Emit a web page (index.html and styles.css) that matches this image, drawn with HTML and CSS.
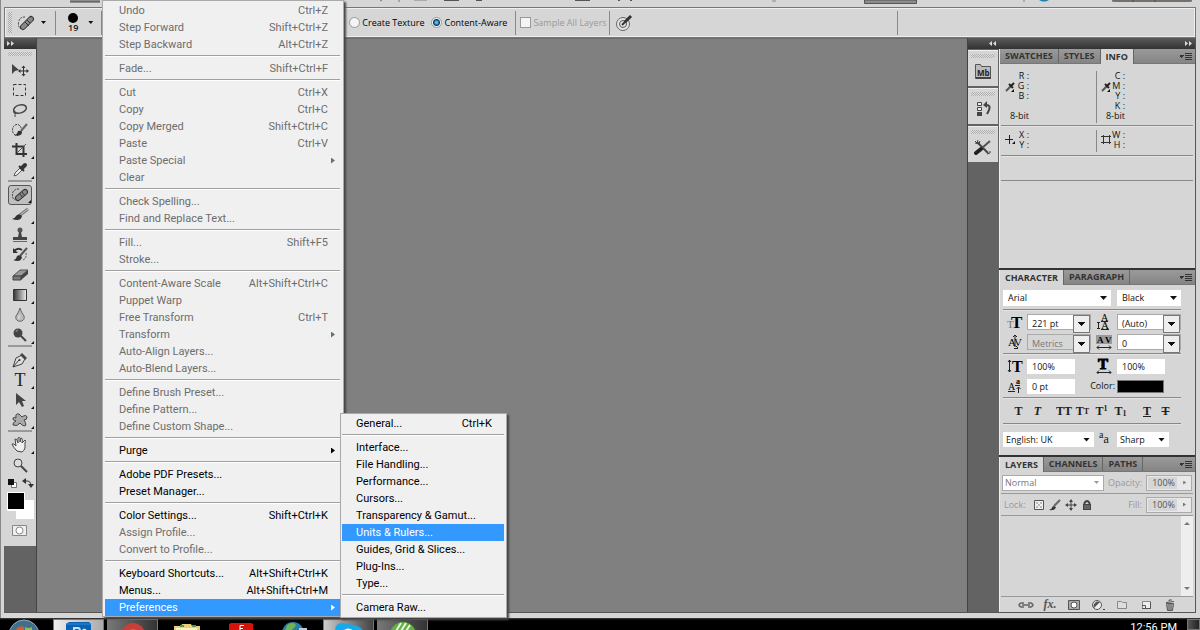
FILE: index.html
```html
<!DOCTYPE html>
<html lang="en">
<head>
  <meta charset="UTF-8">
  <meta name="viewport" content="width=device-width, initial-scale=1.0">
  <title>Photo Editor</title>
  <link rel="stylesheet" href="styles.css">
</head>
<body>
  <!-- Application bar -->
  <header class="app-bar">
    <svg width="640" height="7" viewBox="0 0 640 7">
      <path d="M70 0h30v2H70z" fill="#8c8c8c"/><path d="M70 2h30" stroke="#444"/>
      <path d="M380 0l2 1M399 0v2" stroke="#777"/>
      <path d="M414 .5h13" stroke="#aaa"/><path d="M444 .5h15M476 .5h6M575 .5h15M618 .5h2M630 .5h2" stroke="#555"/>
    </svg>
    <svg class="app-bar-right" width="440" height="7" viewBox="0 0 440 7">
      <path d="M13 0v2M15 0v2M264 0v2" stroke="#888"/>
      <path d="M104.500 0v3.500h52V0z" fill="#8c8c8c" stroke="#555"/>
      <path d="M279 0q5 3 10 0z" fill="#1d7fae"/>
      <path d="M352 0h80v1q0 1-2 1h-76q-2 0-2-1z" fill="#77716d"/><path d="M373 0v2M395 0v2" stroke="#444"/>
    </svg>
  </header>

  <!-- Tool options -->
  <section class="options">
    <span class="grip-v"></span>
    <button class="option-tool" aria-label="Healing brush">
      <svg width="20" height="20" viewBox="0 0 20 20">
        <path d="M9 4Q3 4 2.500 10t4 6" fill="none" stroke="#444" stroke-dasharray="2 1"/>
        <path d="M7 14l8-8" stroke="#333" stroke-width="6" stroke-linecap="round"/>
        <path d="M7 14l8-8" stroke="#888" stroke-width="4" stroke-linecap="round"/>
        <path d="M9 9l4 4M11 7l3 3" stroke="#333"/>
      </svg>
      <i class="caret"></i>
    </button>
    <span class="rule"></span>
    <button class="option-size">
      <span class="size"><i class="dot"></i>19</span>
      <i class="caret"></i>
    </button>
    <span class="rule"></span>
    <div class="option-type">
      <label><input type="radio" name="type">Create Texture</label>
      <label><input type="radio" name="type" checked>Content-Aware</label>
    </div>
    <span class="rule"></span>
    <label class="off"><input type="checkbox" disabled>Sample All Layers</label>
    <span class="rule"></span>
    <button class="option-target" aria-label="Pressure">
      <svg width="18" height="18" viewBox="0 0 18 18">
        <circle cx="8" cy="10" r="6.500" fill="#e4e4e4" stroke="#666"/>
        <circle cx="8" cy="10" r="3.500" fill="none" stroke="#555"/>
        <path d="M7 11l4-4" stroke="#333" stroke-width="2"/><path d="M10 8l6-6" stroke="#333" stroke-width="3"/>
      </svg>
    </button>
    <span class="rule"></span>
  </section>

  <main class="workspace">
    <aside class="toolbox">
      <div class="dock-head">
        <svg width="7" height="5" viewBox="0 0 7 5"><path d="M0 0l3 2.500L0 5zM4 0l3 2.500L4 5z" fill="#ddd"/></svg>
      </div>
      <div class="tools">
        <span class="grip"></span>
        <button class="tool" aria-label="Move"><svg viewBox="0 0 24 20"><path d="M4 4v10l3-3 4-1z" fill="#444"/><path d="M11.500 11h8M15.500 7v8" stroke="#333"/><path d="M15.500 5.500l-2 2.500h4zM15.500 16.500l-2-2.500h4zM10 11l2.500-2v4zM21 11l-2.500-2v4z" fill="#333"/></svg></button>
        <button class="tool more" aria-label="Marquee"><svg viewBox="0 0 24 20"><path d="M5.500 4.500h12v11h-12z" fill="none" stroke="#333" stroke-dasharray="3 2"/></svg></button>
        <button class="tool more" aria-label="Lasso"><svg viewBox="0 0 24 20"><ellipse cx="12" cy="9" rx="6.500" ry="4" transform="rotate(-15 12 9)" fill="none" stroke="#444" stroke-width="1.500"/><path d="M7 11q-2 0-1 2 2 1 2-1-1-1-1 5" fill="none" stroke="#444"/></svg></button>
        <button class="tool more" aria-label="Quick selection"><svg viewBox="0 0 24 20"><ellipse cx="9" cy="10" rx="4.500" ry="5.500" fill="none" stroke="#333" stroke-dasharray="2 1"/><path d="M13 11l6-7" stroke="#666" stroke-width="2"/><path d="M6 15q3 0 4-4 2-1 4 1 0 5-8 3z" fill="#333"/></svg></button>
        <button class="tool more" aria-label="Crop"><svg viewBox="0 0 24 20"><path d="M8.500 3v11H19M4 6.500h11.500V17" fill="none" stroke="#333" stroke-width="2"/><path d="M9 13l9-9" stroke="#555"/></svg></button>
        <button class="tool more" aria-label="Eyedropper"><svg viewBox="0 0 24 20"><path d="M6 16l1-3 6-6 2 2-6 6z" fill="#eee" stroke="#555"/><path d="M11 6l5 5" stroke="#333" stroke-width="2"/><path d="M14 8l3-3" stroke="#333" stroke-width="4" stroke-linecap="round"/></svg></button>
        <hr>
        <button class="tool more active" aria-label="Healing brush"><svg viewBox="0 0 24 20"><path d="M11 4Q5 4 4.500 9t3 6" fill="none" stroke="#444" stroke-dasharray="2 1"/><path d="M10 13l7-6" stroke="#333" stroke-width="6" stroke-linecap="round"/><path d="M10 13l7-6" stroke="#888" stroke-width="4" stroke-linecap="round"/><path d="M12 9l3 4M14 7l3 4" stroke="#333"/></svg></button>
        <button class="tool more" aria-label="Brush"><svg viewBox="0 0 24 20"><path d="M12 10l8-6" stroke="#777" stroke-width="3"/><path d="M12 10l8-6" stroke="#ccc"/><path d="M4 14q3-1 5-4 3-2 5 1-1 6-10 3z" fill="#333"/></svg></button>
        <button class="tool more" aria-label="Clone stamp"><svg viewBox="0 0 24 20"><circle cx="12" cy="5" r="2.500" fill="#555"/><path d="M11 7h2l1 5h5v3H5v-3h5z" fill="#444"/><path d="M5 16.500h14" stroke="#666"/></svg></button>
        <button class="tool more" aria-label="History brush"><svg viewBox="0 0 24 20"><path d="M6 6q4-4 8-1" fill="none" stroke="#333" stroke-width="2"/><path d="M5 3v5h5z" fill="#333"/><path d="M12 11l7-8" stroke="#555" stroke-width="2"/><path d="M5 15q3 0 4-4 3-2 5 1-1 6-9 3z" fill="#333"/><path d="M18 8q1 5-3 7" fill="none" stroke="#555" stroke-dasharray="2 1"/></svg></button>
        <button class="tool more" aria-label="Eraser"><svg viewBox="0 0 24 20"><path d="M5 11l7-6h8l-7 6z" fill="#999" stroke="#555"/><path d="M5 11h8v4H5z" fill="#777" stroke="#444"/><path d="M13 11l7-6v4l-7 6z" fill="#444"/></svg></button>
        <button class="tool more" aria-label="Gradient"><svg viewBox="0 0 24 20"><defs><linearGradient id="grad"><stop stop-color="#333"/><stop offset="1" stop-color="#eee"/></linearGradient></defs><path d="M5.500 4.500h13v11h-13z" fill="url(#grad)" stroke="#333"/></svg></button>
        <button class="tool more" aria-label="Blur"><svg viewBox="0 0 24 20"><path d="M12 3q1 4 4 8c2 7-10 7-8 0q3-4 4-8z" fill="#bbb" stroke="#666"/><path d="M11 14q-1-2 1-4" stroke="#eee" fill="none"/></svg></button>
        <button class="tool more" aria-label="Dodge"><svg viewBox="0 0 24 20"><circle cx="10" cy="8" r="4.500" fill="#444"/><path d="M13 11l5 5" stroke="#444" stroke-width="2"/><path d="M8 7q0-2 2-2" stroke="#999" fill="none"/></svg></button>
        <hr>
        <button class="tool more" aria-label="Pen"><svg viewBox="0 0 24 20"><path d="M5 17l3-9 6-3 3 4-3 5z" fill="#ddd" stroke="#444"/><path d="M14 3l5 5-2 2-5-5z" fill="#444"/><path d="M5 17l6-7" stroke="#444"/><circle cx="11.500" cy="10" r="1" fill="#333"/></svg></button>
        <button class="tool more type" aria-label="Type">T</button>
        <button class="tool more" aria-label="Path selection"><svg viewBox="0 0 24 20"><path d="M8 3v12l3-3 3 5 2-1-2-5h4z" fill="#444"/></svg></button>
        <button class="tool more" aria-label="Custom shape"><svg viewBox="0 0 24 20"><path d="M8 8Q7 3 11 4l3 3q4-3 5 0 0 3-3 3 3 5 1 6-3 0-5-3-3 4-7 2-1-2 3-4-4-1-3-3 1-1 3 0z" fill="#aaa" stroke="#444"/></svg></button>
        <hr>
        <button class="tool more" aria-label="Hand"><svg viewBox="0 0 24 20"><path d="M9 16q-4-4-5-7 2-1 4 2L7 4q2-1 3 4V3q2-1 2 0v4l1-4q2 0 1 5l3-3q1 1 0 3v5q-1 3-3 4z" fill="#eee" stroke="#444"/></svg></button>
        <button class="tool" aria-label="Zoom"><svg viewBox="0 0 24 20"><circle cx="10" cy="8" r="4" fill="#ddd" stroke="#444"/><path d="M13 11l6 6" stroke="#444" stroke-width="2"/></svg></button>
        <svg class="swatches" width="30" height="66" viewBox="0 0 30 66">
          <path d="M6.500 7.500h5v5h-5z" fill="#fff" stroke="#777"/><path d="M3 4h6v6H3z" fill="#111"/>
          <path d="M20 6h2q4 0 4 5" stroke="#333" fill="none"/><path d="M21 3v6l-4-3zM23 9h6l-3 4z" fill="#333"/>
          <path d="M11 25h18v19H11z" fill="#fff"/><path d="M2 17h18v19H2z" fill="#fff"/><path d="M3 18h16v16H3z"/>
          <path d="M7.500 50.500h14v10h-14z" fill="#eee" stroke="#888"/><circle cx="14.500" cy="55.500" r="3.500" fill="#fff" stroke="#888"/>
        </svg>
      </div>
    </aside>

    <section class="canvas"></section>

    <aside class="dock">
      <div class="dock-head split">
        <svg width="7" height="5" viewBox="0 0 7 5"><path d="M3 0L0 2.500 3 5zM7 0L4 2.500 7 5z" fill="#ddd"/></svg>
        <svg width="7" height="5" viewBox="0 0 7 5"><path d="M0 0l3 2.500L0 5zM4 0l3 2.500L4 5z" fill="#ddd"/></svg>
      </div>
      <div class="dock-body">
        <div class="dock-icons">
          <div class="dock-icon"><span class="grip"></span>
            <button aria-label="Mini Bridge"><svg width="18" height="18" viewBox="0 0 18 18"><path d="M1.500 2.500h5l1 2h9v12h-15z" fill="#bbb" stroke="#555"/><path d="M2 16h15" stroke="#444" stroke-width="2"/><text x="3" y="14" font-size="8" font-weight="700" fill="#222">Mb</text></svg></button></div>
          <div class="dock-icon"><span class="grip"></span>
            <button aria-label="History"><svg width="18" height="18" viewBox="0 0 18 18"><path d="M3.500 2.500h4v3h-4zM3.500 7.500h4v3h-4z" fill="#eee" stroke="#444"/><path d="M3 12h5v4H3z" fill="#444"/><path d="M11 5q8-1 2 9" fill="none" stroke="#444" stroke-width="2"/><path d="M9 5l4-4v7z" fill="#444"/></svg></button></div>
          <div class="dock-icon"><span class="grip"></span>
            <button aria-label="Tool presets"><svg width="18" height="18" viewBox="0 0 18 18"><path d="M3 4l11 11" stroke="#444" stroke-width="2"/><path d="M1 3l2 2 1-3M1 5l4 1 1-3M13 16l3-1v-2" stroke="#444" fill="none"/><path d="M8 10l8-7" stroke="#555" stroke-width="2"/><path d="M2 15l5-4" stroke="#222" stroke-width="4" stroke-linecap="round"/></svg></button></div>
        </div>

        <div class="panels">
          <section class="panel info">
            <nav class="tabs"><button>SWATCHES</button><button>STYLES</button><button class="current">INFO</button><i class="panel-menu"></i></nav>
            <div class="readouts">
              <div class="readout">
                <svg width="10" height="12" viewBox="0 0 10 12"><path d="M1 10l5-5" stroke="#555" stroke-width="2"/><path d="M4 3l4 4M6 5l3-3" stroke="#222" stroke-width="2"/><path d="M6 11h3V8z" fill="#111"/></svg>
                <p>R :<br>G :<br>B :<br><br>8-bit</p>
              </div>
              <div class="readout">
                <svg width="10" height="12" viewBox="0 0 10 12"><path d="M1 10l5-5" stroke="#555" stroke-width="2"/><path d="M4 3l4 4M6 5l3-3" stroke="#222" stroke-width="2"/><path d="M6 11h3V8z" fill="#111"/></svg>
                <p>C :<br>M :<br>Y :<br>K :<br>8-bit</p>
              </div>
            </div>
            <div class="readouts pos">
              <div class="readout">
                <svg width="10" height="12" viewBox="0 0 10 12"><path d="M0 5.500h8M4.500 1v9" stroke="#222"/><path d="M7 10h3v-3z" fill="#111"/></svg>
                <p>X :<br>Y :</p>
              </div>
              <div class="readout">
                <svg width="10" height="12" viewBox="0 0 10 12"><path d="M2.500 1v9M8.500 1v9M0 2.500h10M0 8.500h10" fill="none" stroke="#333"/></svg>
                <p>W :<br>H :</p>
              </div>
            </div>
            <div class="info-gap"></div>
          </section>

          <section class="panel character">
            <nav class="tabs"><button class="current">CHARACTER</button><button>PARAGRAPH</button><i class="panel-menu"></i></nav>
            <div class="char-body">
              <div class="char-top">
                <span class="select"><select aria-label="Font"><option>Arial</option></select></span>
                <span class="select"><select aria-label="Style"><option>Black</option></select></span>
              </div>
              <hr>
              <div class="char-grid">
                <svg class="glyph" width="16" height="16" viewBox="0 0 16 16"><text x="0" y="14" font-size="11" fill="#777">T</text><text x="4" y="14" font-size="17" font-weight="700">T</text></svg>
                <span class="combo"><select aria-label="Size"><option>221 pt</option></select></span>
                <svg class="glyph" width="16" height="16" viewBox="0 0 16 16"><text x="5" y="7" font-size="10">A</text><text x="5" y="15" font-size="11">A</text><path d="M2.500 8v7M1 8.500h3M1 14.500h3M5 7.500h7M5 15.500h8" stroke="#222"/></svg>
                <span class="combo"><select aria-label="Leading"><option>(Auto)</option></select></span>
                <svg class="glyph" width="16" height="16" viewBox="0 0 16 16"><text x="1" y="12" font-size="11">A</text><text x="7" y="12" font-size="11">V</text><path d="M8 1v12M6 3l2-2 2 2M7 14.500h4M9 12l2 2" fill="none" stroke="#222"/></svg>
                <span class="combo off"><select aria-label="Kerning"><option>Metrics</option></select></span>
                <svg class="glyph" width="16" height="16" viewBox="0 0 16 16"><path d="M0 1h16v9H0z" fill="#999"/><text x="1" y="9" font-size="9" font-weight="700">A</text><text x="9" y="9" font-size="9" font-weight="700">V</text><path d="M1 13.500h14M3 11.500l-2 2 2 2M13 11.500l2 2-2 2" fill="none" stroke="#222"/></svg>
                <span class="combo"><select aria-label="Tracking"><option>0</option></select></span>
              </div>
              <hr>
              <div class="char-grid short">
                <svg class="glyph" width="16" height="16" viewBox="0 0 16 16"><path d="M2.500 2v12M1 4l1.500-2L4 4M1 12l1.500 2L4 12" fill="none" stroke="#222"/><text x="5" y="14" font-size="16" font-weight="700">T</text></svg>
                <input aria-label="Vertical scale" value="100%">
                <svg class="glyph" width="16" height="16" viewBox="0 0 16 16"><text x="2" y="11" font-size="15" font-weight="700" stroke="#000">T</text><path d="M1 14.500h14M3 12.500l-2 2 2 2M13 12.500l2 2-2 2" fill="none" stroke="#222"/></svg>
                <input aria-label="Horizontal scale" value="100%">
                <svg class="glyph" width="16" height="16" viewBox="0 0 16 16"><text x="1" y="12" font-size="10">A</text><text x="9" y="6" font-size="8" font-weight="700">a</text><path d="M1 13.500h7M8 7.500h5M11.500 9v6M9.500 11l2-2 2 2" fill="none" stroke="#222"/></svg>
                <input aria-label="Baseline shift" value="0 pt">
                <label class="color-label" for="color">Color:</label>
                <button id="color" class="color" aria-label="Text color"></button>
              </div>
              <hr>
              <div class="char-styles">
                <button><b>T</b></button><button><em>T</em></button><button class="wide">TT</button><button>T<small>T</small></button><button>T<sup>1</sup></button><button>T<sub>1</sub></button><button class="wide"><u>T</u></button><button><s>T</s></button>
              </div>
              <hr>
              <div class="char-lang">
                <span class="select"><select aria-label="Language"><option>English: UK</option></select></span>
                <span class="aa"><sup>a</sup>a</span>
                <span class="select"><select aria-label="Anti-aliasing"><option>Sharp</option></select></span>
              </div>
            </div>
          </section>

          <section class="panel layers">
            <nav class="tabs"><button class="current">LAYERS</button><button>CHANNELS</button><button>PATHS</button><i class="panel-menu"></i></nav>
            <div class="layer-row">
              <span class="select blend"><select aria-label="Blend mode"><option>Normal</option></select></span>
              <label for="opacity">Opacity:</label>
              <span class="percent"><input id="opacity" value="100%"><button aria-label="Opacity slider"></button></span>
            </div>
            <div class="layer-row">
              <span class="lock">Lock:</span>
              <button aria-label="Lock transparency"><svg width="12" height="12" viewBox="0 0 12 12"><path d="M1.500 1.500h9v9h-9z" fill="#eee" stroke="#555"/><path d="M3 3h2v2H3zM7 3h2v2H7zM5 5h2v2H5zM3 7h2v2H3zM7 7h2v2H7z" fill="#bbb"/></svg></button>
              <button aria-label="Lock pixels"><svg width="12" height="12" viewBox="0 0 12 12"><path d="M5 7l6-6" stroke="#666" stroke-width="2"/><path d="M0 11q3-1 4-4l3 1q-1 4-7 3z" fill="#333"/></svg></button>
              <button aria-label="Lock position"><svg width="12" height="12" viewBox="0 0 12 12"><path d="M1 6h10M6 1v10" stroke="#444"/><path d="M6 0L4 3h4zM6 12L4 9h4zM0 6l3-2v4zM12 6L9 4v4z" fill="#444"/></svg></button>
              <button aria-label="Lock all"><svg width="12" height="12" viewBox="0 0 12 12"><path d="M3.500 6V4q2.500-4 5 0v2" fill="none" stroke="#444" stroke-width="2"/><path d="M2 5h8v6H2z" fill="#444"/><path d="M3 7h6M3 9h6" stroke="#888"/></svg></button>
              <label class="fill" for="fill">Fill:</label>
              <span class="percent"><input id="fill" value="100%"><button aria-label="Fill slider"></button></span>
            </div>
            <div class="layer-list"><div class="scrollbar"><i class="up"></i><i class="down"></i></div></div>
            <footer class="layer-tools">
              <button aria-label="Link"><svg viewBox="0 0 16 12"><path d="M6 4H3q-4 2 0 4h3M10 4h3q4 2 0 4h-3M4 6h8" fill="none" stroke="#666" stroke-width="1.500"/></svg></button>
              <button aria-label="Effects" class="fx">fx.</button>
              <button aria-label="Mask"><svg viewBox="0 0 16 12"><path d="M2.500 1.500h11v9h-11z" fill="#aaa" stroke="#555"/><circle cx="8" cy="6" r="3" fill="#fff" stroke="#555"/></svg></button>
              <button aria-label="Adjustment"><svg viewBox="0 0 16 12"><circle cx="7" cy="6" r="4.500" fill="#eee" stroke="#555"/><path d="M4 9l6-6a4.500 4.500 0 0 0-6 6z" fill="#555"/><path d="M13 10h2v1h-2z" fill="#444"/></svg></button>
              <button aria-label="Group"><svg viewBox="0 0 16 12"><path d="M3.500 2.500h4l1 1h4v6h-9z" fill="#ddd" stroke="#888"/></svg></button>
              <button aria-label="New layer"><svg viewBox="0 0 16 12"><path d="M4.500 2.500h8v7h-8z" fill="#eee" stroke="#888"/><path d="M4 9.500h8.500V3M7.500 9V6.500H4" stroke="#555" fill="none"/></svg></button>
              <button aria-label="Delete"><svg viewBox="0 0 16 12"><path d="M4 3.500l8-1M7 2V1h3" stroke="#555" fill="none"/><path d="M4.500 4.500h7l-1 7h-5z" fill="#aaa" stroke="#555"/><path d="M7 5v6M9 5v6" stroke="#666"/></svg></button>
            </footer>
          </section>
        </div>
      </div>
    </aside>
  </main>

  <!-- Windows taskbar -->
  <footer class="taskbar">
    <button class="start" aria-label="Start"><svg width="32" height="11" viewBox="0 0 32 11"><circle cx="16" cy="16" r="15" fill="#3f6f8f" stroke="#9ab"/><path d="M9 9q4-3 7-1v3H8z" fill="#e0572a"/><path d="M17 8q4 2 7 0v3h-7z" fill="#8fbf4a"/></svg></button>
    <button class="task lit" aria-label="Photoshop"><svg width="28" height="11" viewBox="0 0 28 11"><path d="M1 4l3-2h20l2 2v7H1z" fill="#0b62b0"/><path d="M1 4h25" stroke="#2c8ade"/><path d="M9 11V8h4q2 0 2 3M18 11q0-2 3-1" fill="none" stroke="#bfe3ff" stroke-width="2"/></svg></button>
    <button class="task" aria-label="Browser"><svg width="28" height="11" viewBox="0 0 28 11"><circle cx="14" cy="15" r="12" fill="#c83f38"/><path d="M9 11q5-4 10 0z" fill="#e0645c"/></svg></button>
    <button class="task flat" aria-label="Explorer"><svg width="28" height="11" viewBox="0 0 28 11"><path d="M1 6h7l1-2h9l1 2h8v5H1z" fill="#e8cf7a"/><path d="M3 9h21" stroke="#fff3c0" stroke-width="2"/><path d="M7 6h4M19 6h4" stroke="#5b9a3c" stroke-width="2"/></svg></button>
    <button class="task flat" aria-label="Reader"><svg width="26" height="11" viewBox="0 0 26 11"><path d="M1 4l2-1h20l2 1v7H1z" fill="#d6120c"/><path d="M16 5.500h-4V11M12 8.500h3" fill="none" stroke="#fff"/></svg></button>
    <button class="task flat" aria-label="Network"><svg width="28" height="11" viewBox="0 0 28 11"><circle cx="12" cy="13" r="11" fill="#2a7fa5"/><path d="M6 5q6-4 9 0-2 4-6 6H4z" fill="#6cb657"/><path d="M18 8h8v3h-8z" fill="#bcd"/></svg></button>
    <button class="task lit2" aria-label="Skype"><svg width="30" height="11" viewBox="0 0 30 11"><path d="M1 11q0-8 7-8 2 0 4 1 14 0 17 7z" fill="#18a9e8"/><path d="M9 11q5-5 11 0z" fill="#fff"/></svg></button>
    <button class="task" aria-label="Corel"><svg width="28" height="11" viewBox="0 0 28 11"><circle cx="14" cy="15" r="13" fill="#62b043"/><path d="M7 11l5-8M12 11l5-8M17 11l4-6" stroke="#e6f6dd" stroke-width="2"/></svg></button>
    <time class="clock">12:56 PM</time>
    <button class="show-desktop" aria-label="Show desktop"></button>
  </footer>

  <!-- Edit menu -->
  <div class="menu edit-menu" role="menu">
    <button disabled>Undo<kbd>Ctrl+Z</kbd></button>
    <button disabled>Step Forward<kbd>Shift+Ctrl+Z</kbd></button>
    <button disabled>Step Backward<kbd>Alt+Ctrl+Z</kbd></button>
    <hr>
    <button disabled>Fade...<kbd>Shift+Ctrl+F</kbd></button>
    <hr>
    <button disabled>Cut<kbd>Ctrl+X</kbd></button>
    <button disabled>Copy<kbd>Ctrl+C</kbd></button>
    <button disabled>Copy Merged<kbd>Shift+Ctrl+C</kbd></button>
    <button disabled>Paste<kbd>Ctrl+V</kbd></button>
    <button disabled class="has-sub">Paste Special</button>
    <button disabled>Clear</button>
    <hr>
    <button disabled>Check Spelling...</button>
    <button disabled>Find and Replace Text...</button>
    <hr>
    <button disabled>Fill...<kbd>Shift+F5</kbd></button>
    <button disabled>Stroke...</button>
    <hr>
    <button disabled>Content-Aware Scale<kbd>Alt+Shift+Ctrl+C</kbd></button>
    <button disabled>Puppet Warp</button>
    <button disabled>Free Transform<kbd>Ctrl+T</kbd></button>
    <button disabled class="has-sub">Transform</button>
    <button disabled>Auto-Align Layers...</button>
    <button disabled>Auto-Blend Layers...</button>
    <hr>
    <button disabled>Define Brush Preset...</button>
    <button disabled>Define Pattern...</button>
    <button disabled>Define Custom Shape...</button>
    <hr>
    <button class="has-sub">Purge</button>
    <hr>
    <button>Adobe PDF Presets...</button>
    <button>Preset Manager...</button>
    <hr>
    <button>Color Settings...<kbd>Shift+Ctrl+K</kbd></button>
    <button disabled>Assign Profile...</button>
    <button disabled>Convert to Profile...</button>
    <hr>
    <button>Keyboard Shortcuts...<kbd>Alt+Shift+Ctrl+K</kbd></button>
    <button>Menus...<kbd>Alt+Shift+Ctrl+M</kbd></button>
    <button class="has-sub selected">Preferences</button>
  </div>

  <div class="menu sub-menu" role="menu">
    <button>General...<kbd>Ctrl+K</kbd></button>
    <hr>
    <button>Interface...</button>
    <button>File Handling...</button>
    <button>Performance...</button>
    <button>Cursors...</button>
    <button>Transparency &amp; Gamut...</button>
    <button class="selected">Units &amp; Rulers...</button>
    <button>Guides, Grid &amp; Slices...</button>
    <button>Plug-Ins...</button>
    <button>Type...</button>
    <hr>
    <button>Camera Raw...</button>
  </div>
</body>
</html>
```

FILE: styles.css
```css
* {
  box-sizing: border-box;
}
body {
  margin: 0;
  height: 100vh;
  display: flex;
  flex-direction: column;
  overflow: hidden;
  position: relative;
  background-color: #d6d6d6;
  box-shadow: inset 1px 0 #888;
  font-family: "Open Sans", "Noto Sans", sans-serif;
  font-size: 9px;
  line-height: 10px;
  color: #111;
}
button,
input,
select {
  font: inherit;
  color: inherit;
  margin: 0;
  padding: 0;
  border: none;
  background: none;
  border-radius: 0;
  min-width: 0;
}
button {
  display: flex;
  align-items: center;
  justify-content: center;
}
select {
  appearance: none;
}
svg {
  display: block;
  flex: none;
}
p {
  margin: 0;
}
hr {
  width: 100%;
  margin: 0;
  border: none;
}

/* Top bars */
.app-bar {
  display: flex;
  height: 7px;
  flex: none;
}
.app-bar-right {
  margin-left: auto;
}
.options {
  display: flex;
  align-items: center;
  flex: none;
  height: 31px;
  margin: 0 4px;
  padding-left: 3px;
  border: 1px solid #777;
  box-shadow: inset 1px 1px #eee, inset -1px -1px #eee;
}
.options label {
  display: flex;
  align-items: center;
  gap: 2px;
  margin-right: 5px;
}
.options input {
  appearance: none;
  width: 11px;
  height: 11px;
  border: 1px solid #999;
  background-color: #f4f4f4;
}
.options input[type="radio"] {
  border-radius: 50%;
}
.options input:checked {
  background: radial-gradient(circle, #4ac0f0 1px, #0a3560 3px, #f4f4f4 4px);
}
.options .off {
  color: #999;
  margin-right: 2px;
}
.rule {
  width: 1px;
  height: 24px;
  background-color: #888;
  margin-right: 4px;
}
.grip-v {
  width: 4px;
  height: 21px;
  margin-right: 4px;
  background: repeating-conic-gradient(#aaa 0 25%, #ddd 0 50%) 0 0 / 2px 2px;
}
.caret {
  width: 5px;
  height: 3px;
  background-color: #111;
  clip-path: polygon(0 0, 100% 0, 50% 100%);
}
.option-tool {
  gap: 5px;
  padding-right: 9px;
}
.option-size {
  gap: 10px;
  padding: 0 8px;
}
.size {
  display: flex;
  flex-direction: column;
  align-items: center;
  font-weight: 600;
}
.dot {
  width: 10px;
  height: 10px;
  border-radius: 50%;
  background-color: #000;
}
.option-type {
  display: flex;
  gap: 2px;
  margin-left: 243px;
  margin-right: 3px;
}
.option-type label {
  color: #000;
}
.option-target {
  padding-left: 1px;
  margin-right: 264px;
}

/* Workspace */
.workspace {
  flex: 1;
  display: flex;
  min-height: 0;
  margin: 0 4px;
  border-bottom: 1px solid #555;
}
.dock-head {
  display: flex;
  align-items: center;
  height: 11px;
  flex: none;
  padding: 0 3px;
  background: linear-gradient(#5a5a5a, #333);
}
.split {
  justify-content: space-between;
  padding-left: 21px;
}
.grip {
  flex: none;
  width: 24px;
  height: 4px;
  background: repeating-conic-gradient(#b0b0b0 0 25%, #ddd 0 50%) 0 0 / 2px 2px;
}
.toolbox {
  width: 33px;
  display: flex;
  flex-direction: column;
  flex: none;
  background-color: #636363;
  border-right: 1px solid #444;
}
.tools {
  display: flex;
  flex-direction: column;
  align-items: center;
  padding-top: 3px;
  background-color: #d6d6d6;
}
.tools .grip {
  margin-bottom: 4px;
}
.tools hr {
  width: 24px;
  height: 5px;
  border-top: 2px solid #999;
  background-color: #d6d6d6;
}
.tool {
  position: relative;
  width: 24px;
  height: 20px;
  flex: none;
}
.tool svg {
  width: 24px;
  height: 20px;
}
.more::after {
  content: "";
  position: absolute;
  right: -2px;
  bottom: 1px;
  width: 3px;
  height: 3px;
  background-color: #111;
  clip-path: polygon(100% 0, 100% 100%, 0 100%);
}
.active {
  border: 1px solid #555;
  border-radius: 3px;
  background-color: #c0c0c0;
}
.active::after {
  right: 0;
}
.type {
  font-family: "Liberation Serif", serif;
  font-size: 18px;
  color: #222;
}
.swatches {
  margin-bottom: 5px;
}
.canvas {
  flex: 1;
  background-color: #808080;
  border-top: 1px solid #6c6c6c;
}

/* Dock */
.dock {
  width: 229px;
  flex: none;
  display: flex;
  flex-direction: column;
  border-left: 1px solid #444;
  border-right: 1px solid #555;
  background-color: #636363;
}
.dock-body {
  flex: 1;
  display: flex;
  gap: 1px;
  min-height: 0;
}
.dock-icons {
  width: 30px;
  flex: none;
  display: flex;
  flex-direction: column;
  gap: 2px;
  padding-top: 1px;
}
.dock-icon {
  height: 36px;
  display: flex;
  flex-direction: column;
  align-items: center;
  gap: 4px;
  padding-top: 3px;
  background-color: #d6d6d6;
  border-top: 1px solid #eee;
}
.panels {
  flex: 1;
  display: flex;
  flex-direction: column;
  gap: 2px;
  background-color: #333;
  min-width: 0;
}
.panel {
  background-color: #d6d6d6;
  border-left: 1px solid #eee;
}
.tabs {
  display: flex;
  height: 15px;
  background: linear-gradient(#9a9a9a, #858585);
  border-bottom: 1px solid #777;
}
.tabs button {
  padding: 0 5px;
  border-right: 1px solid #666;
  font-weight: 700;
  color: #333;
}
.tabs .current {
  height: 15px;
  background-color: #d6d6d6;
}
.panel-menu {
  width: 12px;
  height: 7px;
  margin: 4px 3px 0 auto;
  background:
    conic-gradient(from -45deg at 50% 100%, #333 90deg, transparent 0) 0 2px / 4px 3px no-repeat,
    repeating-linear-gradient(#333 0 1px, transparent 1px 2px) 5px 0 / 7px 7px no-repeat;
}
.info {
  height: 219px;
}
.readouts {
  display: grid;
  grid-template-columns: 95px 1fr;
  margin: 0 2px 0 1px;
  padding: 7px 0 2px;
  border-bottom: 1px solid #888;
}
.readout {
  display: flex;
  align-items: center;
  padding: 0 0 2px 4px;
}
.readout + .readout {
  border-left: 1px solid #888;
}
.readout svg {
  margin-bottom: 18px;
}
.readout p {
  flex: 0 0 24px;
  margin-left: -10px;
  text-align: right;
}
.pos {
  padding: 4px 0 3px;
}
.pos .readout svg {
  margin-bottom: 0;
}
.info-gap {
  height: 25px;
  margin: 0 2px 0 1px;
  border-bottom: 1px solid #888;
}

/* Character panel */
.char-body {
  width: 178px;
  margin-left: 3px;
  padding: 5px 0 8px;
}
.char-body hr,
.readouts {
  box-shadow: 0 1px #e4e4e4;
}
.char-body hr {
  height: 1px;
  margin: 3px 0 4px;
  background-color: #888;
}
.select {
  display: grid;
  align-items: center;
  background-color: #fff;
  height: 16px;
}
.select select,
.select::after {
  grid-area: 1 / 1;
}
.select select {
  padding: 0 5px;
  height: 16px;
}
.select::after {
  content: "";
  justify-self: end;
  width: 7px;
  height: 4px;
  margin-right: 4px;
  background-color: #111;
  clip-path: polygon(0 0, 100% 0, 50% 100%);
  pointer-events: none;
}
.char-top {
  display: grid;
  grid-template-columns: 108px 64px;
  gap: 6px;
}
.char-grid {
  display: grid;
  grid-template-columns: 24px 64px 26px 64px;
  align-items: center;
  row-gap: 4px;
}
.glyph {
  justify-self: center;
  font-family: "Liberation Serif", serif;
}
.combo {
  display: grid;
  align-items: center;
  background-color: #fff;
  height: 16px;
  border: 1px solid #aaa;
}
.combo select,
.combo::after {
  grid-area: 1 / 1;
}
.combo select {
  padding-left: 4px;
  height: 14px;
}
.combo::after {
  content: "";
  justify-self: end;
  width: 15px;
  height: 16px;
  border: 1px solid #777;
  background:
    conic-gradient(from -45deg at 50% 100%, #111 90deg, transparent 0) center / 7px 4px no-repeat,
    #eee;
  pointer-events: none;
}
.combo.off {
  background-color: #d6d6d6;
  color: #777;
}
.short input {
  width: 48px;
  height: 15px;
  padding-left: 5px;
  background-color: #fff;
}
.color-label {
  justify-self: end;
  margin-right: 2px;
}
.color {
  width: 47px;
  height: 13px;
  background-color: #000;
  border: 1px solid #777;
}
.char-styles {
  display: flex;
  align-items: center;
  padding-left: 6px;
  height: 18px;
  font-family: "Liberation Serif", serif;
  font-size: 12px;
  font-weight: 700;
  color: #222;
}
.char-styles button {
  width: 19px;
}
.char-styles .wide {
  width: 26px;
  padding-left: 8px;
}
.char-styles small,
.char-styles sup,
.char-styles sub {
  font-size: 8px;
}
.char-styles small {
  margin-top: 2px;
}
.char-styles sup {
  margin-bottom: 5px;
}
.char-styles sub {
  margin-top: 5px;
}
.char-lang {
  display: grid;
  grid-template-columns: 91px 13px 52px;
  gap: 5px;
  padding-top: 4px;
}
.char-lang .select {
  height: 15px;
}
.char-lang .select select {
  height: 15px;
  padding-left: 3px;
}
.aa {
  font: 12px/14px "Liberation Serif", serif;
}
.aa sup {
  line-height: 0;
}

/* Layers panel */
.layers {
  flex: 1;
  display: flex;
  flex-direction: column;
  min-height: 0;
}
.layer-row {
  display: flex;
  align-items: center;
  gap: 4px;
  height: 22px;
  margin: 0 2px 0 1px;
  padding: 0 1px;
  border-bottom: 1px solid #999;
  color: #999;
}
.blend {
  width: 102px;
  flex: none;
  height: 16px;
  color: #777;
  border: 1px solid #aaa;
}
.blend select {
  height: 14px;
  padding-left: 2px;
}
.blend::after {
  background-color: #999;
  width: 5px;
  height: 3px;
}
.percent {
  display: flex;
  margin-left: auto;
  border: 1px solid #aaa;
  background-color: #e8e8e8;
}
.percent input {
  width: 31px;
  height: 14px;
  padding-left: 4px;
  color: #555;
  background-color: #d6d6d6;
  border: 1px solid #e8e8e8;
}
.percent button {
  width: 13px;
}
.percent button::after {
  content: "";
  width: 3px;
  height: 4px;
  background-color: #777;
  clip-path: polygon(0 0, 100% 50%, 0 100%);
}
.lock {
  padding: 0 3px 0 2px;
}
.fill {
  margin-left: auto;
}
.fill + .percent {
  margin-left: 0;
}
.layer-list {
  flex: 1;
  display: flex;
  justify-content: flex-end;
  margin: 0 2px 0 1px;
  border-bottom: 1px solid #999;
}
.scrollbar {
  width: 12px;
  display: flex;
  flex-direction: column;
  align-items: center;
  justify-content: space-between;
  padding: 6px 0;
  background-color: #eee;
}
.up,
.down {
  width: 6px;
  height: 3px;
  background-color: #777;
}
.up {
  clip-path: polygon(50% 0, 100% 100%, 0 100%);
}
.down {
  clip-path: polygon(0 0, 100% 0, 50% 100%);
}
.layer-tools {
  display: flex;
  gap: 8px;
  height: 15px;
  padding-left: 18px;
  flex: none;
}
.layer-tools button,
.layer-tools svg {
  width: 16px;
}
.layer-tools .fx {
  font: italic 700 12px "Liberation Serif", serif;
  color: #555;
}

/* Taskbar */
.taskbar {
  display: flex;
  align-items: flex-end;
  flex: none;
  height: 12px;
  margin-top: 5px;
  padding-left: 8px;
  background: linear-gradient(#444, #000 2px);
  overflow: hidden;
}
.start {
  width: 32px;
  margin-right: 13px;
}
.task {
  width: 51px;
  height: 11px;
  margin-right: 3px;
  border: 1px solid #777;
  border-bottom: none;
  background: linear-gradient(90deg, #777, #333);
}
.lit {
  background: linear-gradient(90deg, #eee, #aaa);
}
.lit2 {
  background: linear-gradient(90deg, #ccc, #444);
}
.flat {
  background: none;
  border-color: transparent;
}
.clock {
  height: 10px;
  margin-left: auto;
  font-family: Roboto, sans-serif;
  font-size: 11px;
  line-height: 16px;
  color: #fff;
}
.show-desktop {
  width: 13px;
  height: 11px;
  margin-left: 10px;
  border: 1px solid #777;
  background: linear-gradient(90deg, #555, #222);
}

/* Menus */
.menu {
  position: absolute;
  border: 1px solid #aaa;
  background-color: #f0f0f0;
  font-family: Roboto, "Open Sans", sans-serif;
  font-size: 11px;
  color: #000;
  box-shadow: 2px 2px 2px #444;
}
.menu button {
  width: 100%;
  height: 17px;
  padding: 0 12px 0 14px;
  justify-content: flex-start;
}
.menu button:disabled {
  color: #6d6d6d;
}
.menu hr {
  width: auto;
  height: 5px;
  margin-top: 2px;
  border-top: 1px solid #a0a0a0;
  box-shadow: inset 0 1px #fff;
}
.menu kbd {
  margin-left: auto;
  font: inherit;
}
.menu .has-sub {
  padding-right: 5px;
}
.has-sub::after {
  content: "";
  margin-left: auto;
  width: 4px;
  height: 6px;
  background-color: currentColor;
  clip-path: polygon(0 0, 100% 50%, 0 100%);
}
.menu .selected {
  background-color: #3399ff;
  color: #fff;
}
.edit-menu {
  left: 102px;
  top: 0;
  width: 242px;
  padding: 1px 3px 0 2px;
}
.sub-menu {
  left: 340px;
  top: 413px;
  width: 167px;
  padding: 1px 2px 1px 1px;
}
```
